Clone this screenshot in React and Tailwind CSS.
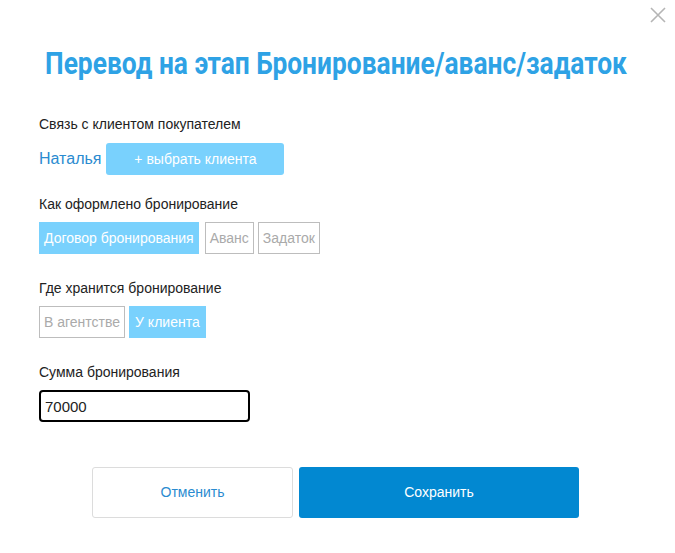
import React, { useState } from "react";

export default function App() {
  const [form, setForm] = useState("contract");
  const [place, setPlace] = useState("client");

  const on = "bg-[#79d1fd] text-white border border-[#79d1fd]";
  const off = "bg-white text-[#aaaaaa] border border-[#bdbdbd]";

  return (
    <div className="w-[675px] h-[553px] bg-white relative overflow-hidden font-['Liberation_Sans',Arial,sans-serif] text-[#222]">
      <button className="absolute right-[8px] top-[6px] w-[18px] h-[18px] text-[#b5b5b5]">
        <svg viewBox="0 0 18 18" width="18" height="18" stroke="currentColor" strokeWidth="1.6">
          <path d="M2 2 L16 16 M16 2 L2 16" />
        </svg>
      </button>

      <div className="pt-[44px] pl-[45px]">
        <h1 className="text-[31px] leading-[40px] font-bold text-[#2ea2e5] font-['Roboto',sans-serif] whitespace-nowrap origin-left scale-x-[0.85]">
          Перевод на этап Бронирование/аванс/задаток
        </h1>
      </div>

      <div className="pl-[39px] pt-[30px]">
        <div className="text-[14px] leading-[20px]">Связь с клиентом покупателем</div>
        <div className="flex items-center mt-[9px]">
          <span className="text-[16px] text-[#2a8bd0]">Наталья</span>
          <button className="ml-[5px] w-[178px] h-[32px] rounded-[3px] bg-[#79d1fd] text-white text-[14px]">
            + выбрать клиента
          </button>
        </div>

        <div className="text-[14px] leading-[20px] mt-[19px]">Как оформлено бронирование</div>
        <div className="flex mt-[8px] gap-[4px] text-[14px]">
          <button onClick={() => setForm("contract")} className={`h-[32px] px-[4px] ${form === "contract" ? on : off}`}>
            Договор бронирования
          </button>
          <button onClick={() => setForm("advance")} className={`h-[32px] px-[4px] ml-[2px] ${form === "advance" ? on : off}`}>
            Аванс
          </button>
          <button onClick={() => setForm("deposit")} className={`h-[32px] px-[4px] ${form === "deposit" ? on : off}`}>
            Задаток
          </button>
        </div>

        <div className="text-[14px] leading-[20px] mt-[24px]">Где хранится бронирование</div>
        <div className="flex mt-[8px] gap-[4px] text-[14px]">
          <button onClick={() => setPlace("agency")} className={`h-[32px] px-[4px] ${place === "agency" ? on : off}`}>
            В агентстве
          </button>
          <button onClick={() => setPlace("client")} className={`h-[32px] px-[5px] ${place === "client" ? on : off}`}>
            У клиента
          </button>
        </div>

        <div className="text-[14px] leading-[20px] mt-[24px]">Сумма бронирования</div>
        <input
          defaultValue="70000"
          className="mt-[8px] w-[211px] h-[32px] border-2 border-black rounded-[4px] px-[4px] text-[15px] outline-none block"
        />
      </div>

      <div className="flex pl-[92px] mt-[45px] gap-[6px]">
        <button className="w-[201px] h-[51px] border border-[#dcdcdc] rounded-[3px] text-[#2a8bd0] text-[14px] bg-white">
          Отменить
        </button>
        <button className="w-[280px] h-[51px] rounded-[3px] bg-[#0288d1] text-white text-[14px]">
          Сохранить
        </button>
      </div>
    </div>
  );
}
